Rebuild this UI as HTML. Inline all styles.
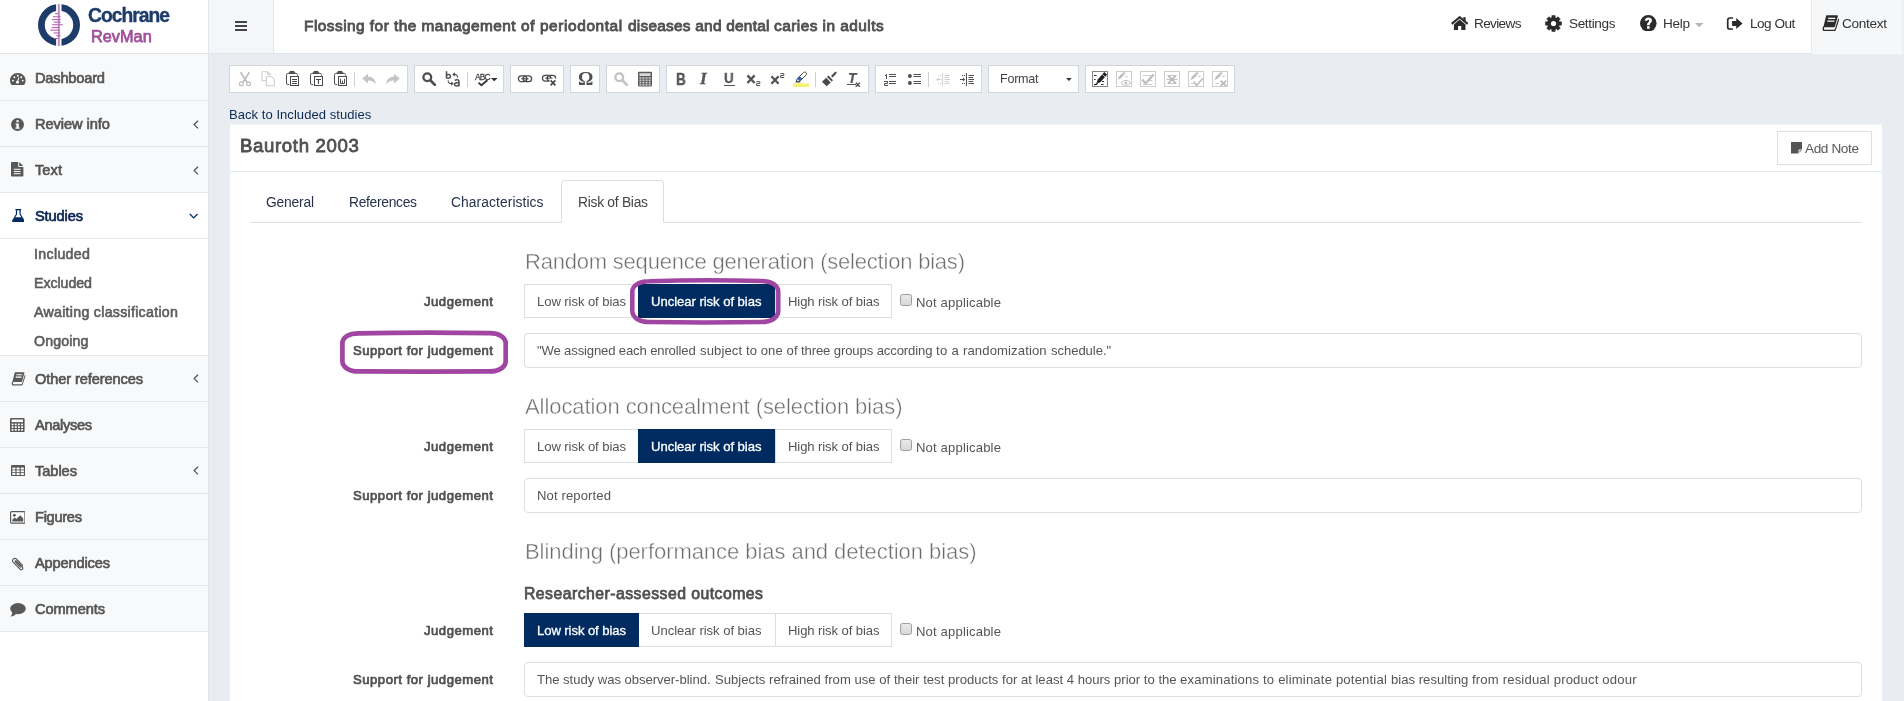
<!DOCTYPE html>
<html><head><meta charset="utf-8"><title>RevMan</title>
<style>
html,body{margin:0;padding:0;}
body{width:1904px;height:701px;overflow:hidden;background:#e9edf2;position:relative;
font-family:"Liberation Sans",sans-serif;}
.t{position:absolute;white-space:nowrap;display:block;will-change:transform;}
.r{position:absolute;box-sizing:border-box;display:block;}
</style></head><body>
<div class="r" style="left:0.00px;top:0.00px;width:1904.00px;height:54.00px;background:#fff;border-bottom:1px solid #e1e4e8;"></div>
<div class="r" style="left:209.00px;top:0.00px;width:65.00px;height:53.00px;background:#f5f6f9;border-right:1px solid #e4e6e9;"></div>
<div class="r" style="left:1811.00px;top:0.00px;width:91.50px;height:54.00px;background:#f6f7f9;border-left:1px solid #e6e8eb;border-right:1px solid #eceef1;border-bottom:1px solid #fafbfc;"></div>
<div class="r" style="left:1902.50px;top:0.00px;width:1.50px;height:54.00px;background:#eef0f3;"></div>
<div class="r" style="left:0.00px;top:54.00px;width:208.00px;height:647.00px;background:#fff;"></div>
<div class="r" style="left:208.00px;top:0.00px;width:1.00px;height:701.00px;background:#e1e4e8;"></div>
<div class="r" style="left:0.00px;top:54.00px;width:208.00px;height:47.00px;background:#f8f9fa;border-bottom:1px solid #e4e6e9;"></div>
<div class="r" style="left:0.00px;top:101.00px;width:208.00px;height:46.00px;background:#f8f9fa;border-bottom:1px solid #e4e6e9;"></div>
<div class="r" style="left:0.00px;top:147.00px;width:208.00px;height:46.00px;background:#f8f9fa;border-bottom:1px solid #e4e6e9;"></div>
<div class="r" style="left:0.00px;top:356.00px;width:208.00px;height:46.00px;background:#f8f9fa;border-bottom:1px solid #e4e6e9;"></div>
<div class="r" style="left:0.00px;top:402.00px;width:208.00px;height:46.00px;background:#f8f9fa;border-bottom:1px solid #e4e6e9;"></div>
<div class="r" style="left:0.00px;top:448.00px;width:208.00px;height:46.00px;background:#f8f9fa;border-bottom:1px solid #e4e6e9;"></div>
<div class="r" style="left:0.00px;top:494.00px;width:208.00px;height:46.00px;background:#f8f9fa;border-bottom:1px solid #e4e6e9;"></div>
<div class="r" style="left:0.00px;top:540.00px;width:208.00px;height:46.00px;background:#f8f9fa;border-bottom:1px solid #e4e6e9;"></div>
<div class="r" style="left:0.00px;top:586.00px;width:208.00px;height:46.00px;background:#f8f9fa;border-bottom:1px solid #e4e6e9;"></div>
<div class="r" style="left:0.00px;top:192.00px;width:208.00px;height:1.00px;background:#e4e6e9;"></div>
<div class="r" style="left:0.00px;top:238.00px;width:208.00px;height:1.00px;background:#e4e6e9;"></div>
<div class="r" style="left:0.00px;top:355.00px;width:208.00px;height:1.00px;background:#e4e6e9;"></div>
<span class="t" style="left:88.30px;top:6.16px;font-size:19.30px;line-height:19.30px;font-weight:700;color:#1d3c6a;letter-spacing:-1.003px;-webkit-text-stroke:0.35px #1d3c6a;">Cochrane</span>
<span class="t" style="left:90.50px;top:27.70px;font-size:16.30px;line-height:16.30px;font-weight:400;color:#a0509b;letter-spacing:0.021px;-webkit-text-stroke:0.75px #a0509b;">RevMan</span>
<span class="t" style="left:304.00px;top:17.96px;font-size:15.40px;line-height:15.40px;font-weight:400;color:#505050;letter-spacing:0.474px;white-space:pre;-webkit-text-stroke:0.85px #505050;">Flossing for the management </span>
<span class="t" style="left:521.00px;top:17.96px;font-size:15.40px;line-height:15.40px;font-weight:400;color:#505050;letter-spacing:0.610px;white-space:pre;-webkit-text-stroke:0.85px #505050;">of periodontal </span>
<span class="t" style="left:627.75px;top:17.96px;font-size:15.40px;line-height:15.40px;font-weight:400;color:#505050;letter-spacing:0.249px;white-space:pre;-webkit-text-stroke:0.85px #505050;">diseases and dental </span>
<span class="t" style="left:774.00px;top:17.96px;font-size:15.40px;line-height:15.40px;font-weight:400;color:#505050;letter-spacing:0.465px;white-space:pre;-webkit-text-stroke:0.85px #505050;">caries in adults</span>
<span class="t" style="left:1474.00px;top:16.99px;font-size:13.60px;line-height:13.60px;font-weight:400;color:#333;letter-spacing:-0.649px;">Reviews</span>
<span class="t" style="left:1569.00px;top:16.99px;font-size:13.60px;line-height:13.60px;font-weight:400;color:#333;letter-spacing:-0.377px;">Settings</span>
<span class="t" style="left:1663.00px;top:16.99px;font-size:13.60px;line-height:13.60px;font-weight:400;color:#333;letter-spacing:-0.324px;">Help</span>
<span class="t" style="left:1750.00px;top:16.99px;font-size:13.60px;line-height:13.60px;font-weight:400;color:#333;letter-spacing:-0.498px;">Log Out</span>
<span class="t" style="left:1842.00px;top:16.99px;font-size:13.60px;line-height:13.60px;font-weight:400;color:#333;letter-spacing:-0.312px;">Context</span>
<span class="t" style="left:35.30px;top:70.64px;font-size:14.60px;line-height:14.60px;font-weight:400;color:#555;letter-spacing:-0.178px;-webkit-text-stroke:0.68px #555;">Dashboard</span>
<span class="t" style="left:35.30px;top:116.64px;font-size:14.60px;line-height:14.60px;font-weight:400;color:#555;letter-spacing:-0.047px;-webkit-text-stroke:0.68px #555;">Review info</span>
<span class="t" style="left:35.30px;top:162.64px;font-size:14.60px;line-height:14.60px;font-weight:400;color:#555;letter-spacing:0.075px;-webkit-text-stroke:0.68px #555;">Text</span>
<span class="t" style="left:35.30px;top:371.64px;font-size:14.60px;line-height:14.60px;font-weight:400;color:#555;letter-spacing:-0.103px;-webkit-text-stroke:0.68px #555;">Other references</span>
<span class="t" style="left:35.30px;top:417.64px;font-size:14.60px;line-height:14.60px;font-weight:400;color:#555;letter-spacing:-0.320px;-webkit-text-stroke:0.68px #555;">Analyses</span>
<span class="t" style="left:35.30px;top:463.64px;font-size:14.60px;line-height:14.60px;font-weight:400;color:#555;letter-spacing:-0.041px;-webkit-text-stroke:0.68px #555;">Tables</span>
<span class="t" style="left:35.30px;top:509.64px;font-size:14.60px;line-height:14.60px;font-weight:400;color:#555;letter-spacing:-0.281px;-webkit-text-stroke:0.68px #555;">Figures</span>
<span class="t" style="left:35.30px;top:555.64px;font-size:14.60px;line-height:14.60px;font-weight:400;color:#555;letter-spacing:-0.145px;-webkit-text-stroke:0.68px #555;">Appendices</span>
<span class="t" style="left:35.30px;top:601.64px;font-size:14.60px;line-height:14.60px;font-weight:400;color:#555;letter-spacing:-0.084px;-webkit-text-stroke:0.68px #555;">Comments</span>
<span class="t" style="left:35.30px;top:208.64px;font-size:14.60px;line-height:14.60px;font-weight:400;color:#0a2450;letter-spacing:-0.116px;-webkit-text-stroke:0.68px #0a2450;">Studies</span>
<span class="t" style="left:34.00px;top:247.18px;font-size:14.20px;line-height:14.20px;font-weight:400;color:#5c5c5c;letter-spacing:0.330px;-webkit-text-stroke:0.60px #5c5c5c;">Included</span>
<span class="t" style="left:34.00px;top:276.18px;font-size:14.20px;line-height:14.20px;font-weight:400;color:#5c5c5c;letter-spacing:-0.060px;-webkit-text-stroke:0.60px #5c5c5c;">Excluded</span>
<span class="t" style="left:34.00px;top:305.18px;font-size:14.20px;line-height:14.20px;font-weight:400;color:#5c5c5c;letter-spacing:0.279px;-webkit-text-stroke:0.60px #5c5c5c;">Awaiting classification</span>
<span class="t" style="left:34.00px;top:334.18px;font-size:14.20px;line-height:14.20px;font-weight:400;color:#5c5c5c;letter-spacing:0.135px;-webkit-text-stroke:0.60px #5c5c5c;">Ongoing</span>
<div class="r" style="left:229.00px;top:65.00px;width:179.00px;height:27.50px;background:#fff;border:1px solid #d3d5d8;"></div>
<div class="r" style="left:414.00px;top:65.00px;width:90.00px;height:27.50px;background:#fff;border:1px solid #d3d5d8;"></div>
<div class="r" style="left:510.00px;top:65.00px;width:54.00px;height:27.50px;background:#fff;border:1px solid #d3d5d8;"></div>
<div class="r" style="left:570.00px;top:65.00px;width:30.00px;height:27.50px;background:#fff;border:1px solid #d3d5d8;"></div>
<div class="r" style="left:606.00px;top:65.00px;width:54.00px;height:27.50px;background:#fff;border:1px solid #d3d5d8;"></div>
<div class="r" style="left:666.00px;top:65.00px;width:203.00px;height:27.50px;background:#fff;border:1px solid #d3d5d8;"></div>
<div class="r" style="left:875.00px;top:65.00px;width:107.00px;height:27.50px;background:#fff;border:1px solid #d3d5d8;"></div>
<div class="r" style="left:988.00px;top:65.00px;width:91.00px;height:27.50px;background:#fff;border:1px solid #d3d5d8;"></div>
<div class="r" style="left:1085.00px;top:65.00px;width:150.00px;height:27.50px;background:#fff;border:1px solid #d3d5d8;"></div>
<div class="r" style="left:354.00px;top:72.00px;width:1.00px;height:15.00px;background:#cfd1d4;"></div>
<div class="r" style="left:467.00px;top:72.00px;width:1.00px;height:15.00px;background:#cfd1d4;"></div>
<div class="r" style="left:814.50px;top:72.00px;width:1.00px;height:15.00px;background:#cfd1d4;"></div>
<div class="r" style="left:928.00px;top:72.00px;width:1.00px;height:15.00px;background:#cfd1d4;"></div>
<span class="t" style="left:999.50px;top:72.83px;font-size:12.60px;line-height:12.60px;font-weight:400;color:#444;letter-spacing:-0.281px;">Format</span>
<svg class="r" style="left:1066.20px;top:78.10px;" width="5.80" height="2.90" viewBox="0 0 8 4"><path d="M0 0h8L4 4z" fill="#333"/></svg>
<span class="t" style="left:228.90px;top:107.90px;font-size:13.00px;line-height:13.00px;font-weight:400;color:#0a2a55;letter-spacing:0.056px;">Back to Included studies</span>
<div class="r" style="left:229.50px;top:124.00px;width:1652.50px;height:1.00px;background:#f3f5f8;"></div>
<div class="r" style="left:229.50px;top:125.00px;width:1652.50px;height:600.00px;background:#fff;"></div>
<div class="r" style="left:229.50px;top:171.00px;width:1652.50px;height:1.00px;background:#e6e8ea;"></div>
<span class="t" style="left:240.40px;top:136.86px;font-size:18.60px;line-height:18.60px;font-weight:400;color:#505050;letter-spacing:0.646px;-webkit-text-stroke:0.80px #505050;">Bauroth 2003</span>
<div class="r" style="left:1777.00px;top:131.00px;width:95.00px;height:34.00px;background:#fff;border:1px solid #dddfe2;"></div>
<svg class="r" style="left:1790.50px;top:142.00px;" width="11.50" height="11.50" viewBox="0 0 12 12"><path d="M0 0h12v7.5L8 12H0z" fill="#555"/><path d="M8.3 12V8.3H12z" fill="#555" stroke="#fff" stroke-width="1"/></svg>
<span class="t" style="left:1804.70px;top:141.59px;font-size:13.60px;line-height:13.60px;font-weight:400;color:#585858;letter-spacing:-0.387px;">Add Note</span>
<div class="r" style="left:250.00px;top:222.00px;width:1612.00px;height:1.00px;background:#dcdfe2;"></div>
<div class="r" style="left:561.00px;top:180.00px;width:103.00px;height:43.00px;background:#fff;border:1px solid #dcdfe2;border-bottom:1px solid #fff;border-radius:4px 4px 0 0;"></div>
<span class="t" style="left:266.00px;top:196.02px;font-size:13.80px;line-height:13.80px;font-weight:400;color:#25324a;letter-spacing:-0.183px;">General</span>
<span class="t" style="left:349.00px;top:196.02px;font-size:13.80px;line-height:13.80px;font-weight:400;color:#25324a;letter-spacing:-0.286px;">References</span>
<span class="t" style="left:451.00px;top:196.02px;font-size:13.80px;line-height:13.80px;font-weight:400;color:#25324a;letter-spacing:0.089px;">Characteristics</span>
<span class="t" style="left:578.00px;top:196.02px;font-size:13.80px;line-height:13.80px;font-weight:400;color:#444;letter-spacing:-0.260px;">Risk of Bias</span>
<span class="t" style="left:524.50px;top:250.58px;font-size:22.00px;line-height:22.00px;font-weight:400;color:#6c6c6c;letter-spacing:-0.211px;-webkit-text-stroke:0.45px #fff;">Random sequence generation (selection bias)</span>
<span class="t" style="left:524.50px;top:395.58px;font-size:22.00px;line-height:22.00px;font-weight:400;color:#6c6c6c;letter-spacing:-0.074px;-webkit-text-stroke:0.45px #fff;">Allocation concealment (selection bias)</span>
<span class="t" style="left:524.50px;top:540.58px;font-size:22.00px;line-height:22.00px;font-weight:400;color:#6c6c6c;letter-spacing:-0.049px;-webkit-text-stroke:0.45px #fff;">Blinding (performance bias and detection bias)</span>
<span class="t" style="left:524.30px;top:586.43px;font-size:15.80px;line-height:15.80px;font-weight:400;color:#505050;letter-spacing:0.460px;-webkit-text-stroke:0.75px #505050;">Researcher-assessed outcomes</span>
<div class="r" style="left:524.00px;top:284.00px;width:368.00px;height:34.00px;background:#fff;border:1px solid #dcdee0;"></div>
<div class="r" style="left:638.00px;top:284.00px;width:1.00px;height:34.00px;background:#dcdee0;"></div>
<div class="r" style="left:775.00px;top:284.00px;width:1.00px;height:34.00px;background:#dcdee0;"></div>
<div class="r" style="left:638.00px;top:284.00px;width:137.00px;height:34.00px;background:#002b60;"></div>
<span class="t" style="left:537.00px;top:295.11px;font-size:13.10px;line-height:13.10px;font-weight:400;color:#555;letter-spacing:-0.085px;">Low risk of bias</span>
<span class="t" style="left:651.20px;top:295.11px;font-size:13.10px;line-height:13.10px;font-weight:400;color:#fff;letter-spacing:-0.047px;-webkit-text-stroke:0.30px #fff;">Unclear risk of bias</span>
<span class="t" style="left:787.50px;top:295.11px;font-size:13.10px;line-height:13.10px;font-weight:400;color:#555;letter-spacing:-0.106px;">High risk of bias</span>
<div class="r" style="left:900.30px;top:294.40px;width:11.60px;height:11.60px;background:linear-gradient(#e9e9e9,#d8d8d8);border:1px solid #9c9c9c;border-radius:2.5px;"></div>
<span class="t" style="left:916.30px;top:295.71px;font-size:13.10px;line-height:13.10px;font-weight:400;color:#555;letter-spacing:0.152px;">Not applicable</span>
<span class="t" style="left:424.00px;top:294.91px;font-size:13.10px;line-height:13.10px;font-weight:400;color:#505050;letter-spacing:0.523px;-webkit-text-stroke:0.72px #505050;">Judgement</span>
<div class="r" style="left:524.00px;top:333.00px;width:1338.00px;height:34.50px;background:#fff;border:1px solid #dcdee0;border-radius:4px;"></div>
<span class="t" style="left:353.00px;top:344.11px;font-size:13.10px;line-height:13.10px;font-weight:400;color:#505050;letter-spacing:0.519px;-webkit-text-stroke:0.72px #505050;">Support for judgement</span>
<span class="t" style="left:537.40px;top:344.11px;font-size:13.10px;line-height:13.10px;font-weight:400;color:#555;letter-spacing:-0.147px;white-space:pre;">"We assigned each enrolled </span>
<span class="t" style="left:699.50px;top:344.11px;font-size:13.10px;line-height:13.10px;font-weight:400;color:#555;letter-spacing:0.096px;white-space:pre;">subject to one of </span>
<span class="t" style="left:801.00px;top:344.11px;font-size:13.10px;line-height:13.10px;font-weight:400;color:#555;letter-spacing:-0.115px;white-space:pre;">three groups according </span>
<span class="t" style="left:936.00px;top:344.11px;font-size:13.10px;line-height:13.10px;font-weight:400;color:#555;letter-spacing:0.352px;white-space:pre;">to a </span>
<span class="t" style="left:963.25px;top:344.11px;font-size:13.10px;line-height:13.10px;font-weight:400;color:#555;letter-spacing:0.112px;white-space:pre;">randomization </span>
<span class="t" style="left:1050.75px;top:344.11px;font-size:13.10px;line-height:13.10px;font-weight:400;color:#555;letter-spacing:-0.064px;white-space:pre;">schedule."</span>
<div class="r" style="left:524.00px;top:429.00px;width:368.00px;height:34.00px;background:#fff;border:1px solid #dcdee0;"></div>
<div class="r" style="left:638.00px;top:429.00px;width:1.00px;height:34.00px;background:#dcdee0;"></div>
<div class="r" style="left:775.00px;top:429.00px;width:1.00px;height:34.00px;background:#dcdee0;"></div>
<div class="r" style="left:638.00px;top:429.00px;width:137.00px;height:34.00px;background:#002b60;"></div>
<span class="t" style="left:537.00px;top:440.11px;font-size:13.10px;line-height:13.10px;font-weight:400;color:#555;letter-spacing:-0.085px;">Low risk of bias</span>
<span class="t" style="left:651.20px;top:440.11px;font-size:13.10px;line-height:13.10px;font-weight:400;color:#fff;letter-spacing:-0.047px;-webkit-text-stroke:0.30px #fff;">Unclear risk of bias</span>
<span class="t" style="left:787.50px;top:440.11px;font-size:13.10px;line-height:13.10px;font-weight:400;color:#555;letter-spacing:-0.106px;">High risk of bias</span>
<div class="r" style="left:900.30px;top:439.40px;width:11.60px;height:11.60px;background:linear-gradient(#e9e9e9,#d8d8d8);border:1px solid #9c9c9c;border-radius:2.5px;"></div>
<span class="t" style="left:916.30px;top:440.71px;font-size:13.10px;line-height:13.10px;font-weight:400;color:#555;letter-spacing:0.152px;">Not applicable</span>
<span class="t" style="left:424.00px;top:439.91px;font-size:13.10px;line-height:13.10px;font-weight:400;color:#505050;letter-spacing:0.523px;-webkit-text-stroke:0.72px #505050;">Judgement</span>
<div class="r" style="left:524.00px;top:478.00px;width:1338.00px;height:34.50px;background:#fff;border:1px solid #dcdee0;border-radius:4px;"></div>
<span class="t" style="left:353.00px;top:489.11px;font-size:13.10px;line-height:13.10px;font-weight:400;color:#505050;letter-spacing:0.519px;-webkit-text-stroke:0.72px #505050;">Support for judgement</span>
<span class="t" style="left:537.00px;top:489.11px;font-size:13.10px;line-height:13.10px;font-weight:400;color:#555;letter-spacing:0.107px;">Not reported</span>
<div class="r" style="left:524.00px;top:613.00px;width:368.00px;height:34.00px;background:#fff;border:1px solid #dcdee0;"></div>
<div class="r" style="left:638.00px;top:613.00px;width:1.00px;height:34.00px;background:#dcdee0;"></div>
<div class="r" style="left:775.00px;top:613.00px;width:1.00px;height:34.00px;background:#dcdee0;"></div>
<div class="r" style="left:524.00px;top:613.00px;width:115.00px;height:34.00px;background:#002b60;"></div>
<span class="t" style="left:537.00px;top:624.11px;font-size:13.10px;line-height:13.10px;font-weight:400;color:#fff;letter-spacing:-0.085px;-webkit-text-stroke:0.30px #fff;">Low risk of bias</span>
<span class="t" style="left:651.20px;top:624.11px;font-size:13.10px;line-height:13.10px;font-weight:400;color:#555;letter-spacing:-0.047px;">Unclear risk of bias</span>
<span class="t" style="left:787.50px;top:624.11px;font-size:13.10px;line-height:13.10px;font-weight:400;color:#555;letter-spacing:-0.106px;">High risk of bias</span>
<div class="r" style="left:900.30px;top:623.40px;width:11.60px;height:11.60px;background:linear-gradient(#e9e9e9,#d8d8d8);border:1px solid #9c9c9c;border-radius:2.5px;"></div>
<span class="t" style="left:916.30px;top:624.71px;font-size:13.10px;line-height:13.10px;font-weight:400;color:#555;letter-spacing:0.152px;">Not applicable</span>
<span class="t" style="left:424.00px;top:623.91px;font-size:13.10px;line-height:13.10px;font-weight:400;color:#505050;letter-spacing:0.523px;-webkit-text-stroke:0.72px #505050;">Judgement</span>
<div class="r" style="left:524.00px;top:662.00px;width:1338.00px;height:34.50px;background:#fff;border:1px solid #dcdee0;border-radius:4px;"></div>
<span class="t" style="left:353.00px;top:673.11px;font-size:13.10px;line-height:13.10px;font-weight:400;color:#505050;letter-spacing:0.519px;-webkit-text-stroke:0.72px #505050;">Support for judgement</span>
<span class="t" style="left:537.30px;top:673.11px;font-size:13.10px;line-height:13.10px;font-weight:400;color:#555;letter-spacing:-0.040px;white-space:pre;">The study was observer-blind. </span>
<span class="t" style="left:714.50px;top:673.11px;font-size:13.10px;line-height:13.10px;font-weight:400;color:#555;letter-spacing:0.020px;white-space:pre;">Subjects refrained from use of their test products </span>
<span class="t" style="left:1001.70px;top:673.11px;font-size:13.10px;line-height:13.10px;font-weight:400;color:#555;letter-spacing:-0.003px;white-space:pre;">for at least 4 hours prior to the </span>
<span class="t" style="left:1180.00px;top:673.11px;font-size:13.10px;line-height:13.10px;font-weight:400;color:#555;letter-spacing:0.174px;white-space:pre;">examinations to eliminate potential </span>
<span class="t" style="left:1390.90px;top:673.11px;font-size:13.10px;line-height:13.10px;font-weight:400;color:#555;letter-spacing:0.011px;white-space:pre;">bias resulting </span>
<span class="t" style="left:1471.90px;top:673.11px;font-size:13.10px;line-height:13.10px;font-weight:400;color:#555;letter-spacing:0.169px;white-space:pre;">from residual product odour</span>
<svg class="r" style="left:620.00px;top:270.00px;" width="170.00" height="64.00" viewBox="0 0 170 64"><path d="M29.30 11.20 C63.40 10.20 107.20 10.20 141.30 10.95 C151.16 10.95 158.30 15.32 158.30 21.70 L158.30 41.10 C158.30 47.48 151.16 52.10 141.30 52.10 C107.20 52.60 63.40 52.60 29.30 52.10 C19.44 52.10 12.30 47.48 12.30 41.10 L12.30 21.70 C12.30 15.32 19.44 11.20 29.30 11.20 Z" fill="none" stroke="#a145a3" stroke-width="4.5" stroke-linejoin="round"/></svg>
<svg class="r" style="left:330.00px;top:322.00px;" width="190.00" height="60.00" viewBox="0 0 190 60"><path d="M28.40 11.30 C69.55 10.50 118.55 10.50 159.70 11.10 C168.98 11.10 175.70 15.31 175.70 21.40 L175.70 38.90 C175.70 44.99 168.98 49.40 159.70 49.40 C118.55 49.80 69.55 49.80 28.40 49.40 C19.12 49.40 12.40 44.99 12.40 38.90 L12.40 21.40 C12.40 15.31 19.12 11.30 28.40 11.30 Z" fill="none" stroke="#a145a3" stroke-width="4.7" stroke-linejoin="round"/></svg>
<svg class="r" style="left:38.00px;top:4.00px;" width="42.00" height="42.00" viewBox="0 0 42 42"><circle cx="21" cy="21" r="17.6" fill="none" stroke="#1d3c6a" stroke-width="6.8"/><rect x="18.1" y="-1" width="5.4" height="44" fill="#fff"/><rect x="19.8" y="0" width="2" height="42" fill="#c58bc4"/><rect x="17.0" y="9.2" width="4.0" height="1.1" fill="#b566b2"/><rect x="15.0" y="12.2" width="7.6" height="1.1" fill="#b566b2"/><rect x="13.8" y="15.0" width="9.0" height="1.1" fill="#b566b2"/><rect x="15.6" y="17.6" width="7.0" height="1.1" fill="#b566b2"/><rect x="14.2" y="20.2" width="10.6" height="1.1" fill="#b566b2"/><rect x="13.6" y="23.0" width="8.0" height="1.1" fill="#b566b2"/><rect x="12.4" y="25.6" width="9.4" height="1.1" fill="#b566b2"/><rect x="15.6" y="28.4" width="6.6" height="1.1" fill="#b566b2"/><rect x="18.4" y="31.2" width="4.2" height="1.1" fill="#b566b2"/><rect x="16.8" y="34.0" width="3.0" height="1.1" fill="#b566b2"/></svg>
<div class="r" style="left:235.00px;top:21.20px;width:12.40px;height:1.90px;background:#444;"></div>
<div class="r" style="left:235.00px;top:25.20px;width:12.40px;height:1.90px;background:#444;"></div>
<div class="r" style="left:235.00px;top:29.20px;width:12.40px;height:1.90px;background:#444;"></div>
<svg class="r" style="left:1450.60px;top:15.60px;" width="17.40" height="14.60" viewBox="0 0 17.4 14.6"><path d="M8.7 3.6 L2.9 8.4 V13.6 a.6 .6 0 0 0 .6 .6 H7.1 V10 h3.2 v4.2 h3.6 a.6 .6 0 0 0 .6 -.6 V8.4 Z" fill="#2b2b2b"/><path d="M.7 7.9 L8.7 1.2 L16.7 7.9" fill="none" stroke="#2b2b2b" stroke-width="2.1" stroke-linejoin="miter"/><rect x="12.3" y="1.2" width="2.3" height="4.6" fill="#2b2b2b"/></svg>
<svg class="r" style="left:1544.90px;top:14.60px;" width="17.00" height="17.00" viewBox="0 0 17 17"><polygon points="6.70,2.67 6.87,0.46 10.13,0.46 10.30,2.67 11.35,3.10 13.03,1.67 15.33,3.97 13.90,5.65 14.33,6.70 16.54,6.87 16.54,10.13 14.33,10.30 13.90,11.35 15.33,13.03 13.03,15.33 11.35,13.90 10.30,14.33 10.13,16.54 6.87,16.54 6.70,14.33 5.65,13.90 3.97,15.33 1.67,13.03 3.10,11.35 2.67,10.30 0.46,10.13 0.46,6.87 2.67,6.70 3.10,5.65 1.67,3.97 3.97,1.67 5.65,3.10" fill="#2b2b2b" stroke="#2b2b2b" stroke-width=".5" stroke-linejoin="round"/><circle cx="8.5" cy="8.5" r="2.6" fill="#fff"/></svg>
<svg class="r" style="left:1640.00px;top:14.80px;" width="16.60" height="16.60" viewBox="0 0 16.6 16.6"><circle cx="8.3" cy="8.3" r="8.3" fill="#2b2b2b"/><g transform="translate(8.3 8.3) scale(1.22) translate(-8.3 -8.3)"><path d="M5.4 6.3 C5.5 4.4 6.8 3.5 8.4 3.5 C10.1 3.5 11.3 4.5 11.3 6 C11.3 7.9 9.4 8 9.4 9.8 H7.3 C7.3 7.5 9 7.4 9 6.2 C9 5.7 8.7 5.4 8.3 5.4 C7.8 5.4 7.5 5.7 7.5 6.3 Z" fill="#fff"/><rect x="7.3" y="10.7" width="2.1" height="2.1" fill="#fff"/></g></svg>
<svg class="r" style="left:1694.50px;top:23.00px;" width="8.60" height="4.30" viewBox="0 0 8.6 4.3"><path d="M0 0h8.6L4.3 4.3z" fill="#b5b5b5"/></svg>
<svg class="r" style="left:1725.80px;top:16.60px;" width="17.60" height="13.00" viewBox="0 0 18 14.5"><path d="M6.2 1.1 H3.4 A2.3 2.3 0 0 0 1.1 3.4 V11.1 A2.3 2.3 0 0 0 3.4 13.4 H6.2" fill="none" stroke="#2b2b2b" stroke-width="1.9" stroke-linecap="round"/><path d="M6 4.6 H10.6 V1.2 L17.6 7.25 L10.6 13.3 V9.9 H6 Z" fill="#2b2b2b"/></svg>
<svg class="r" style="left:1821.80px;top:14.80px;" width="17.40" height="16.40" viewBox="0 0 17.4 16.4"><path d="M5 .2 H14.9 C15.7 .2 16 .8 15.8 1.5 L13 11.2 C12.8 11.9 12.4 12.2 11.7 12.2 H1.3 L4 1.3 C4.2 .5 4.5 .2 5 .2 Z" fill="#2b2b2b"/><path d="M1.2 11.4 C.1 13.2 .2 16.3 2.5 16.3 H12.1 C13 16.3 13.5 15.9 13.8 15.1 L17.3 4.3 L16.3 3.5 L13 13.8 C12.8 14.4 12.5 14.7 12 14.7 H2.7 C1.8 14.7 1.7 13.4 2.4 12.1 Z" fill="#2b2b2b"/><path d="M6.1 3.4 H13.3 M5.3 6.2 H12.4" stroke="#fff" stroke-width="1.25"/></svg>
<svg class="r" style="left:10.20px;top:72.60px;" width="15.60" height="12.00" viewBox="0 0 15.6 12"><path d="M7.8 0 C12.3 0 15.6 3.4 15.6 7.4 C15.6 9 15.2 10.4 14.4 11.6 C14.2 11.9 14 12 13.7 12 H1.9 C1.6 12 1.4 11.9 1.2 11.6 C.4 10.4 0 9 0 7.4 C0 3.4 3.3 0 7.8 0 Z" fill="#585858"/><circle cx="2.9" cy="7.6" r=".95" fill="#fff"/><circle cx="4.4" cy="4.2" r=".95" fill="#fff"/><circle cx="7.8" cy="2.7" r=".95" fill="#fff"/><circle cx="11.2" cy="4.2" r=".95" fill="#fff"/><circle cx="12.7" cy="7.6" r=".95" fill="#fff"/><path d="M7.4 9.2 L8.8 4.6" stroke="#fff" stroke-width="1"/><circle cx="7.5" cy="9.3" r="1.45" fill="#fff"/></svg>
<svg class="r" style="left:11.20px;top:117.60px;" width="13.00" height="13.00" viewBox="0 0 13 13"><circle cx="6.5" cy="6.5" r="6.5" fill="#585858"/><rect x="5.4" y="2.2" width="2.3" height="2" fill="#fff"/><path d="M4.6 5.4 H7.8 V9.4 H8.7 V10.8 H4.4 V9.4 H5.4 V6.8 H4.6 Z" fill="#fff"/></svg>
<svg class="r" style="left:11.20px;top:162.20px;" width="12.40" height="14.60" viewBox="0 0 12.4 14.6"><path d="M.8 0 H7.2 V4.2 A.8 .8 0 0 0 8 5 H12.4 V13.8 A.8 .8 0 0 1 11.6 14.6 H.8 A.8 .8 0 0 1 0 13.8 V.8 A.8 .8 0 0 1 .8 0 Z" fill="#585858"/><path d="M8.2 0 L12.3 4 H8.2 Z" fill="#585858"/><path d="M2.8 7.3 H9.6 M2.8 9.5 H9.6 M2.8 11.7 H9.6" stroke="#fff" stroke-width="1"/></svg>
<svg class="r" style="left:11.60px;top:208.80px;" width="12.60" height="13.40" viewBox="0 0 12.6 13.4"><path d="M3.4 .6 H9.2 M4.5 .6 V5.2 L.9 11.2 C.4 12.2 .9 12.9 1.9 12.9 H10.7 C11.7 12.9 12.2 12.2 11.7 11.2 L8.1 5.2 V.6" fill="none" stroke="#002b60" stroke-width="1.2"/><path d="M3 8.2 H9.6 L11.6 11.6 C11.9 12.3 11.5 12.9 10.7 12.9 H1.9 C1.1 12.9 .7 12.3 1 11.6 Z" fill="#002b60"/></svg>
<svg class="r" style="left:10.60px;top:372.30px;" width="15.00" height="13.60" viewBox="0 0 17.4 16.4"><path d="M5 .2 H14.9 C15.7 .2 16 .8 15.8 1.5 L13 11.2 C12.8 11.9 12.4 12.2 11.7 12.2 H1.3 L4 1.3 C4.2 .5 4.5 .2 5 .2 Z" fill="#585858"/><path d="M1.2 11.4 C.1 13.2 .2 16.3 2.5 16.3 H12.1 C13 16.3 13.5 15.9 13.8 15.1 L17.3 4.3 L16.3 3.5 L13 13.8 C12.8 14.4 12.5 14.7 12 14.7 H2.7 C1.8 14.7 1.7 13.4 2.4 12.1 Z" fill="#585858"/><path d="M6.1 3.4 H13.3 M5.3 6.2 H12.4" stroke="#fff" stroke-width="1.25"/></svg>
<svg class="r" style="left:10.00px;top:417.80px;" width="14.60" height="14.20" viewBox="0 0 14.6 14.2"><rect x="0" y="0" width="14.6" height="14.2" rx="1.2" fill="#585858"/><rect x="1.6" y="1.5" width="11.4" height="2.6" fill="#fff"/><rect x="1.6" y="5.6" width="1.9" height="1.7" fill="#fff"/><rect x="4.8" y="5.6" width="1.9" height="1.7" fill="#fff"/><rect x="7.9" y="5.6" width="1.9" height="1.7" fill="#fff"/><rect x="11.1" y="5.6" width="1.9" height="1.7" fill="#fff"/><rect x="1.6" y="8.3" width="1.9" height="1.7" fill="#fff"/><rect x="4.8" y="8.3" width="1.9" height="1.7" fill="#fff"/><rect x="7.9" y="8.3" width="1.9" height="1.7" fill="#fff"/><rect x="11.1" y="8.3" width="1.9" height="1.7" fill="#fff"/><rect x="1.6" y="11.0" width="1.9" height="1.7" fill="#fff"/><rect x="4.8" y="11.0" width="1.9" height="1.7" fill="#fff"/><rect x="7.9" y="11.0" width="1.9" height="1.7" fill="#fff"/><rect x="11.1" y="11.0" width="1.9" height="1.7" fill="#fff"/></svg>
<svg class="r" style="left:10.60px;top:464.80px;" width="14.20" height="11.40" viewBox="0 0 14.2 11.4"><rect x="0" y="0" width="14.2" height="11.4" rx="1.2" fill="#585858"/><rect x="1.30" y="2.60" width="3.1" height="1.9" fill="#fff"/><rect x="5.55" y="2.60" width="3.1" height="1.9" fill="#fff"/><rect x="9.80" y="2.60" width="3.1" height="1.9" fill="#fff"/><rect x="1.30" y="5.35" width="3.1" height="1.9" fill="#fff"/><rect x="5.55" y="5.35" width="3.1" height="1.9" fill="#fff"/><rect x="9.80" y="5.35" width="3.1" height="1.9" fill="#fff"/><rect x="1.30" y="8.10" width="3.1" height="1.9" fill="#fff"/><rect x="5.55" y="8.10" width="3.1" height="1.9" fill="#fff"/><rect x="9.80" y="8.10" width="3.1" height="1.9" fill="#fff"/></svg>
<svg class="r" style="left:9.90px;top:510.80px;" width="15.60" height="12.80" viewBox="0 0 15.6 12.8"><rect x=".6" y=".6" width="14.4" height="11.6" rx="1" fill="#fff" stroke="#585858" stroke-width="1.2"/><circle cx="4.4" cy="4.2" r="1.5" fill="#585858"/><path d="M2.4 10.6 V8.6 L4.8 6.4 L6.4 8 L10.2 4.2 L13.2 7.2 V10.6 Z" fill="#585858"/></svg>
<svg class="r" style="left:11.40px;top:556.60px;" width="13.40" height="14.00" viewBox="0 0 13.4 14"><path d="M11.6 8.4 L5.6 2.2 C4.6 1.2 3.2 1.2 2.3 2.1 C1.4 3 1.4 4.4 2.4 5.4 L9 12.2 C9.7 12.9 10.7 12.9 11.3 12.3 C11.9 11.7 11.9 10.7 11.2 10 L5.4 4 C5.1 3.7 4.7 3.7 4.4 4 C4.1 4.3 4.1 4.7 4.4 5 L9.4 10.2" fill="none" stroke="#585858" stroke-width="1.15" stroke-linecap="round"/></svg>
<svg class="r" style="left:9.90px;top:603.00px;" width="15.80" height="13.80" viewBox="0 0 15.8 13.8"><ellipse cx="8" cy="5.6" rx="7.8" ry="5.6" fill="#585858"/><path d="M2.2 8.4 C2.4 10.8 1.6 12.4 .4 13.6 C3 13.4 5 12.2 6.2 10.4 Z" fill="#585858"/></svg>
<svg class="r" style="left:192.60px;top:119.60px;" width="6.00" height="9.20" viewBox="0 0 6 9.2"><path d="M5 .8 L1.2 4.6 L5 8.4" fill="none" stroke="#555" stroke-width="1.3"/></svg>
<svg class="r" style="left:192.60px;top:165.60px;" width="6.00" height="9.20" viewBox="0 0 6 9.2"><path d="M5 .8 L1.2 4.6 L5 8.4" fill="none" stroke="#555" stroke-width="1.3"/></svg>
<svg class="r" style="left:192.60px;top:374.30px;" width="6.00" height="9.20" viewBox="0 0 6 9.2"><path d="M5 .8 L1.2 4.6 L5 8.4" fill="none" stroke="#555" stroke-width="1.3"/></svg>
<svg class="r" style="left:192.60px;top:466.30px;" width="6.00" height="9.20" viewBox="0 0 6 9.2"><path d="M5 .8 L1.2 4.6 L5 8.4" fill="none" stroke="#555" stroke-width="1.3"/></svg>
<svg class="r" style="left:188.80px;top:212.60px;" width="9.40" height="6.20" viewBox="0 0 9.4 6.2"><path d="M.8 1 L4.7 4.9 L8.6 1" fill="none" stroke="#002b60" stroke-width="1.3"/></svg>
<svg class="r" style="left:237.00px;top:71.00px;" width="16.00" height="16.00" viewBox="0 0 16 16"><path d="M3.6 1.2 L10 11.2 M12.4 1.2 L6 11.2" stroke="#bdbdbd" stroke-width="1.7" fill="none"/><circle cx="4.4" cy="12.8" r="1.9" fill="none" stroke="#bdbdbd" stroke-width="1.2"/><circle cx="11.6" cy="12.8" r="1.9" fill="none" stroke="#bdbdbd" stroke-width="1.2"/></svg>
<svg class="r" style="left:260.50px;top:71.00px;" width="16.00" height="16.00" viewBox="0 0 16 16"><path d="M5 9.7 H1 V.7 H6.6 L9.2 3.3 V5.2" fill="none" stroke="#cdcdcd" stroke-width="1.1"/><path d="M6.4 .8 V3.5 H9" fill="none" stroke="#cdcdcd" stroke-width=".9"/><path d="M5.3 5.7 H10.6 L13.3 8.4 V14.7 H5.3 Z" fill="#fff" stroke="#cdcdcd" stroke-width="1.1"/></svg>
<svg class="r" style="left:284.00px;top:71.00px;" width="16.00" height="16.00" viewBox="0 0 16 16"><rect x="5.6" y=".1" width="4.8" height="1.6" rx=".6" fill="#4a4a4a"/><rect x="4.5" y="1.3" width="7" height="1.7" fill="#4a4a4a"/><path d="M4.4 2.5 H3.7 C2.9 2.5 2.5 2.9 2.5 3.7 V12.3 C2.5 13.1 2.9 13.5 3.7 13.5 H5.2 M11.6 2.5 H12.4 C13.1 2.5 13.5 2.9 13.5 3.7 V4.6" fill="none" stroke="#4a4a4a" stroke-width="1"/><rect x="6.5" y="5.5" width="8" height="9" fill="#fff" stroke="#4a4a4a" stroke-width="1"/><path d="M8 8.5 H13 M8 10.5 H13 M8 12.5 H13" stroke="#4a4a4a" stroke-width="1"/></svg>
<svg class="r" style="left:308.00px;top:71.00px;" width="16.00" height="16.00" viewBox="0 0 16 16"><rect x="5.6" y=".1" width="4.8" height="1.6" rx=".6" fill="#4a4a4a"/><rect x="4.5" y="1.3" width="7" height="1.7" fill="#4a4a4a"/><path d="M4.4 2.5 H3.7 C2.9 2.5 2.5 2.9 2.5 3.7 V12.3 C2.5 13.1 2.9 13.5 3.7 13.5 H5.2 M11.6 2.5 H12.4 C13.1 2.5 13.5 2.9 13.5 3.7 V4.6" fill="none" stroke="#4a4a4a" stroke-width="1"/><rect x="6.5" y="5.5" width="8" height="9" fill="#fff" stroke="#4a4a4a" stroke-width="1"/><path d="M8 8.5 H13 M10.5 8.5 V13" stroke="#4a4a4a" stroke-width="1.1" fill="none"/></svg>
<svg class="r" style="left:332.00px;top:71.00px;" width="16.00" height="16.00" viewBox="0 0 16 16"><rect x="5.6" y=".1" width="4.8" height="1.6" rx=".6" fill="#4a4a4a"/><rect x="4.5" y="1.3" width="7" height="1.7" fill="#4a4a4a"/><path d="M4.4 2.5 H3.7 C2.9 2.5 2.5 2.9 2.5 3.7 V12.3 C2.5 13.1 2.9 13.5 3.7 13.5 H5.2 M11.6 2.5 H12.4 C13.1 2.5 13.5 2.9 13.5 3.7 V4.6" fill="none" stroke="#4a4a4a" stroke-width="1"/><rect x="6.5" y="5.5" width="8" height="9" fill="#fff" stroke="#4a4a4a" stroke-width="1"/><path d="M8.5 7.8 V12.5 H12.5 V7.8 M10.5 9.8 V12.5" stroke="#4a4a4a" stroke-width="1" fill="none"/></svg>
<svg class="r" style="left:361.20px;top:72.00px;" width="16.00" height="16.00" viewBox="0 0 16 16"><path d="M1.2 6.6 L7 1.8 V4.8 C11.6 4.8 14.6 7.2 14.8 12.6 C13.2 9.8 11 8.6 7 8.6 V11.4 Z" fill="#c4c4c4"/></svg>
<svg class="r" style="left:384.60px;top:72.00px;" width="16.00" height="16.00" viewBox="0 0 16 16"><g transform="translate(16,0) scale(-1,1)"><path d="M1.2 6.6 L7 1.8 V4.8 C11.6 4.8 14.6 7.2 14.8 12.6 C13.2 9.8 11 8.6 7 8.6 V11.4 Z" fill="#c4c4c4"/></g></svg>
<svg class="r" style="left:420.60px;top:71.00px;" width="16.00" height="16.00" viewBox="0 0 16 16"><circle cx="6.3" cy="6.3" r="3.9" fill="none" stroke="#4d4d4d" stroke-width="2.3"/><path d="M9.8 9.8 L13.9 13.9" stroke="#4d4d4d" stroke-width="2.7" stroke-linecap="round"/></svg>
<svg class="r" style="left:444.60px;top:71.00px;" width="16.00" height="16.00" viewBox="0 0 16 16"><path d="M1.5 .2 V7.4 M1.5 4.4 C2.4 3 5.4 2.9 5.4 5.2 C5.4 7.7 2.4 7.7 1.5 6.4" fill="none" stroke="#4d4d4d" stroke-width="1.5"/><path d="M9.8 9.6 C10.8 8.4 14 8.2 14 10.4 V15.4 M14 12 C11.6 11.6 9.5 12 9.5 13.6 C9.5 15.4 12.6 15.4 14 13.8" fill="none" stroke="#4d4d4d" stroke-width="1.5"/><path d="M9 3.4 C11.6 3.2 12.6 4.4 12.6 6.6" fill="none" stroke="#4d4d4d" stroke-width="1.1"/><path d="M9.8 1.2 L7.2 3.4 L9.8 5.6 Z" fill="#4d4d4d"/><path d="M3.2 9.4 C3 11.6 4.2 12.6 6.8 12.6" fill="none" stroke="#4d4d4d" stroke-width="1.1"/><path d="M6.2 10.4 L8.8 12.6 L6.2 14.8 Z" fill="#4d4d4d"/></svg>
<span class="t" style="left:474.8px;top:72.4px;font-size:8.4px;line-height:9px;font-weight:400;color:#444;letter-spacing:-0.85px;transform:scaleY(1.12);transform-origin:0 0;-webkit-text-stroke:.25px #444;">ABC</span>
<svg class="r" style="left:477.00px;top:79.00px;" width="12.00" height="8.00" viewBox="0 0 12 8"><path d="M1.4 3.6 L4.4 6.2 L10.4 1.2" fill="none" stroke="#3a3a3a" stroke-width="1.9"/></svg>
<svg class="r" style="left:490.60px;top:77.60px;" width="6.40" height="3.40" viewBox="0 0 6.4 3.4"><path d="M0 0h6.4L3.2 3.4z" fill="#333"/></svg>
<svg class="r" style="left:517.00px;top:71.00px;" width="16.00" height="16.00" viewBox="0 0 16 16"><rect x="1.4" y="4.9" width="8.4" height="5.8" rx="2.9" fill="none" stroke="#484848" stroke-width="1.3"/><rect x="6.2" y="4.9" width="8.4" height="5.8" rx="2.9" fill="none" stroke="#484848" stroke-width="1.3"/><path d="M4.4 7.8 H11.6" stroke="#484848" stroke-width="1.2"/></svg>
<svg class="r" style="left:541.00px;top:71.00px;" width="16.00" height="16.00" viewBox="0 0 16 16"><g transform="translate(0,-.6)"><rect x="1.4" y="4.9" width="8.4" height="5.8" rx="2.9" fill="none" stroke="#484848" stroke-width="1.3"/><rect x="6.2" y="4.9" width="8.4" height="5.8" rx="2.9" fill="none" stroke="#484848" stroke-width="1.3"/><path d="M4.4 7.8 H11.6" stroke="#484848" stroke-width="1.2"/></g><rect x="8.4" y="7.6" width="7.6" height="8" fill="#fff"/><path d="M9.6 9.4 L14.4 14.4 M14.4 9.4 L9.6 14.4" stroke="#484848" stroke-width="1.6"/></svg>
<span class="t" style="left:577.6px;top:69.2px;font-family:'Liberation Serif',serif;font-size:19.2px;line-height:20px;font-weight:700;color:#505050;">&#937;</span>
<svg class="r" style="left:613.00px;top:71.00px;" width="16.00" height="16.00" viewBox="0 0 16 16"><circle cx="6.3" cy="6.3" r="3.9" fill="none" stroke="#c2c2c2" stroke-width="2.3"/><path d="M9.8 9.8 L13.9 13.9" stroke="#c2c2c2" stroke-width="2.7" stroke-linecap="round"/></svg>
<svg class="r" style="left:637.00px;top:71.00px;" width="16.00" height="16.00" viewBox="0 0 16 16"><rect x="1" y=".8" width="14" height="14.6" rx="1" fill="#5a5a5a"/><rect x="2.4" y="2.2" width="11.2" height="2.8" fill="#d8d8d8"/><rect x="2.40" y="6.20" width="2" height="1.6" fill="#cfcfcf"/><rect x="5.47" y="6.20" width="2" height="1.6" fill="#cfcfcf"/><rect x="8.54" y="6.20" width="2" height="1.6" fill="#cfcfcf"/><rect x="11.61" y="6.20" width="2" height="1.6" fill="#cfcfcf"/><rect x="2.40" y="8.50" width="2" height="1.6" fill="#cfcfcf"/><rect x="5.47" y="8.50" width="2" height="1.6" fill="#cfcfcf"/><rect x="8.54" y="8.50" width="2" height="1.6" fill="#cfcfcf"/><rect x="11.61" y="8.50" width="2" height="1.6" fill="#cfcfcf"/><rect x="2.40" y="10.80" width="2" height="1.6" fill="#cfcfcf"/><rect x="5.47" y="10.80" width="2" height="1.6" fill="#cfcfcf"/><rect x="8.54" y="10.80" width="2" height="1.6" fill="#cfcfcf"/><rect x="11.61" y="10.80" width="2" height="1.6" fill="#cfcfcf"/><rect x="2.40" y="13.10" width="2" height="1.6" fill="#cfcfcf"/><rect x="5.47" y="13.10" width="2" height="1.6" fill="#cfcfcf"/><rect x="8.54" y="13.10" width="2" height="1.6" fill="#cfcfcf"/><rect x="11.61" y="13.10" width="2" height="1.6" fill="#cfcfcf"/></svg>
<span class="t" style="left:675.90px;top:72.09px;font-family:'Liberation Sans';font-size:15.60px;line-height:15.60px;font-weight:700;color:#555;transform:scaleX(0.860);transform-origin:0 0;-webkit-text-stroke:0.45px #555;">B</span>
<span class="t" style="left:700.00px;top:70.34px;font-family:'Liberation Serif';font-size:17.20px;line-height:17.20px;font-weight:700;font-style:italic;color:#555;transform:scaleX(1.000);transform-origin:0 0;-webkit-text-stroke:0.30px #555;">I</span>
<span class="t" style="left:723.90px;top:70.84px;font-family:'Liberation Sans';font-size:14.60px;line-height:14.60px;font-weight:700;color:#555;transform:scaleX(0.920);transform-origin:0 0;-webkit-text-stroke:0.30px #555;">U</span>
<div class="r" style="left:723.60px;top:85.00px;width:11.20px;height:1.10px;background:#555;"></div>
<svg class="r" style="left:746.00px;top:71.00px;" width="16.00" height="16.00" viewBox="0 0 16 16"><path d="M1.4 4.4 L8.6 12 M8.6 4.4 L1.4 12" stroke="#555" stroke-width="2.3"/><path d="M10.4 10.6 h3.4 v1.9 h-3.2 v2 h3.6" fill="none" stroke="#555" stroke-width="1"/></svg>
<svg class="r" style="left:770.00px;top:71.00px;" width="16.00" height="16.00" viewBox="0 0 16 16"><path d="M1.4 5.2 L8.6 12.8 M8.6 5.2 L1.4 12.8" stroke="#555" stroke-width="2.3"/><path d="M10.4 2.6 h3.4 v1.9 h-3.2 v2 h3.6" fill="none" stroke="#555" stroke-width="1"/></svg>
<svg class="r" style="left:793.00px;top:71.00px;" width="16.00" height="16.00" viewBox="0 0 16 16"><rect x="0" y="12.4" width="16" height="3.6" fill="#f4f170"/><path d="M3.2 10.6 L4.2 7.6 L10.6 1.6 C11.4 .9 12.4 .9 13.1 1.6 C13.8 2.3 13.8 3.2 13.1 4 L6.8 10.2 Z" fill="#fff" stroke="#444" stroke-width="1"/><path d="M4.2 7.8 L6.6 10.2 L9.2 7.6 L6.8 5.2 Z" fill="#3d59b5"/><path d="M2.6 11 H7.4" stroke="#444" stroke-width="1"/></svg>
<svg class="r" style="left:821.40px;top:71.00px;" width="16.00" height="16.00" viewBox="0 0 16 16"><path d="M10 5 L13.6 1.2 C14.2 .6 15 .6 15.4 1.1 C15.8 1.6 15.7 2.3 15.2 2.8 L11.6 6.4 Z" fill="#4a4a4a"/><path d="M7.4 4.6 L12 9.2 L10.6 10.6 L6 6 Z" fill="#4a4a4a"/><path d="M5.2 6.8 L9.8 11.4 L5.6 15.2 L1 10.8 Z" fill="#4a4a4a"/></svg>
<span class="t" style="left:847.60px;top:71.72px;font-family:'Liberation Sans';font-size:13.80px;line-height:13.80px;font-weight:700;font-style:italic;color:#555;transform:scaleX(1.000);transform-origin:0 0;-webkit-text-stroke:0.20px #555;">T</span>
<div class="r" style="left:846.80px;top:84.20px;width:9.20px;height:1.10px;background:#555;"></div>
<svg class="r" style="left:855.00px;top:81.60px;" width="5.60" height="5.60" viewBox="0 0 6 6"><path d="M.8 .8 L5.2 5.2 M5.2 .8 L.8 5.2" stroke="#555" stroke-width="1.5"/></svg>
<svg class="r" style="left:882.00px;top:71.00px;" width="16.00" height="16.00" viewBox="0 0 16 16"><path d="M7 3.5 H14 M7 5.5 H14 M7 10.5 H14 M7 12.5 H14" stroke="#505050" stroke-width="1"/><path d="M3 4.5 H4 M4.5 3 V8" fill="none" stroke="#505050" stroke-width="1"/><path d="M2 10.5 H5.5 M5.5 10 V12.5 H2.5 V14.5 H6" fill="none" stroke="#505050" stroke-width="1"/></svg>
<svg class="r" style="left:906.00px;top:71.00px;" width="16.00" height="16.00" viewBox="0 0 16 16"><path d="M7.4 3.5 H15 M7.4 5.5 H15 M7.4 10.5 H15 M7.4 12.5 H15" stroke="#505050" stroke-width="1"/><circle cx="3.9" cy="5" r="1.95" fill="#505050"/><circle cx="3.9" cy="12" r="1.95" fill="#505050"/></svg>
<svg class="r" style="left:935.00px;top:71.00px;" width="16.00" height="16.00" viewBox="0 0 16 16"><path d="M7.5 2 V15" stroke="#d0d0d0" stroke-width="1"/><path d="M9.5 4.5 H15 M9.5 6.5 H14 M9.5 8.5 H15 M9.5 10.5 H14 M9.5 12.5 H15" stroke="#d0d0d0" stroke-width="1"/><path d="M3 4.5 H4 M5 4.5 H6 M3 12.5 H4 M5 12.5 H6" stroke="#d0d0d0" stroke-width="1"/><path d="M1.6 8.5 H6" stroke="#d0d0d0" stroke-width="1"/><path d="M3.4 6.6 L1.2 8.5 L3.4 10.4 Z" fill="#d0d0d0"/></svg>
<svg class="r" style="left:959.00px;top:71.00px;" width="16.00" height="16.00" viewBox="0 0 16 16"><path d="M7.5 2 V15" stroke="#505050" stroke-width="1"/><path d="M9.5 4.5 H15 M9.5 6.5 H14 M9.5 8.5 H15 M9.5 10.5 H14 M9.5 12.5 H15" stroke="#505050" stroke-width="1"/><path d="M3 4.5 H4 M5 4.5 H6 M3 12.5 H4 M5 12.5 H6" stroke="#505050" stroke-width="1"/><path d="M1 8.5 H5" stroke="#505050" stroke-width="1"/><path d="M4 6.6 L6.2 8.5 L4 10.4 Z" fill="#505050"/></svg>
<svg class="r" style="left:1092.00px;top:71.00px;" width="16.00" height="16.00" viewBox="0 0 16 16"><rect x=".5" y=".5" width="15" height="15" fill="#fff" stroke="#858585" stroke-width="1"/><path d="M2 4.5 H4.6 M2 8.5 H3.6 M2 13.5 H4 M9 13.5 H11.6 M10 10.5 H12" stroke="#333" stroke-width="1"/><path d="M15.16 3.59 L12.24 1.01 L5.69 8.40 L4.30 12.90 L8.61 10.98 Z" fill="#222"/><path d="M13.09 5.93 L10.17 3.34" stroke="#fff" stroke-width=".7"/><path d="M5.2 12.4 C4.4 13.6 3.4 13.8 2.4 13.6" fill="none" stroke="#222" stroke-width="1.4"/></svg>
<svg class="r" style="left:1116.00px;top:71.00px;" width="16.00" height="16.00" viewBox="0 0 16 16"><rect x=".5" y=".5" width="15" height="15" fill="#fff" stroke="#cdcdcd" stroke-width="1"/><path d="M9.53 2.51 L7.67 0.69 L2.86 5.64 L1.80 8.60 L4.73 7.45 Z" fill="#bcbcbc"/><path d="M8.08 4.00 L6.22 2.19" stroke="#fff" stroke-width=".7"/><path d="M9 5.5 H12" stroke="#bcbcbc" stroke-width=".7"/><path d="M5.2 11.8 C7.2 8.6 12.6 8.6 14.6 11.8 C12.6 15 7.2 15 5.2 11.8 Z" fill="#fff" stroke="#bcbcbc" stroke-width="1"/><circle cx="9.9" cy="11.8" r="1.4" fill="#bcbcbc"/></svg>
<svg class="r" style="left:1140.00px;top:71.00px;" width="16.00" height="16.00" viewBox="0 0 16 16"><rect x=".5" y=".5" width="15" height="15" fill="#fff" stroke="#cdcdcd" stroke-width="1"/><path d="M3 4.5 H11 M8 9.5 H12.5 M3 13.5 H12.5" stroke="#bcbcbc" stroke-width=".8"/><path d="M2.2 8.6 L5.6 12.4 L13.6 3.6" fill="none" stroke="#bcbcbc" stroke-width="2.3"/></svg>
<svg class="r" style="left:1164.00px;top:71.00px;" width="16.00" height="16.00" viewBox="0 0 16 16"><rect x=".5" y=".5" width="15" height="15" fill="#fff" stroke="#cdcdcd" stroke-width="1"/><path d="M3.5 4.5 H12.5 M2.5 8.5 H13.5 M3.5 12.5 H12.5" stroke="#bcbcbc" stroke-width=".9"/><path d="M4.2 4.6 L11.8 12.4 M11.8 4.6 L4.2 12.4" stroke="#bcbcbc" stroke-width="1.9"/></svg>
<svg class="r" style="left:1188.00px;top:71.00px;" width="16.00" height="16.00" viewBox="0 0 16 16"><rect x=".5" y=".5" width="15" height="15" fill="#fff" stroke="#cdcdcd" stroke-width="1"/><path d="M10.73 2.51 L8.87 0.69 L3.66 6.04 L2.60 9.00 L5.53 7.86 Z" fill="#bcbcbc"/><path d="M9.28 4.00 L7.42 2.18" stroke="#fff" stroke-width=".7"/><path d="M3 12.5 H6 M10 5.5 H13" stroke="#bcbcbc" stroke-width=".7"/><path d="M6 10.8 L8.6 14.4 L14.8 7.2" fill="none" stroke="#bcbcbc" stroke-width="1.6"/></svg>
<svg class="r" style="left:1212.00px;top:71.00px;" width="16.00" height="16.00" viewBox="0 0 16 16"><rect x=".5" y=".5" width="15" height="15" fill="#fff" stroke="#cdcdcd" stroke-width="1"/><path d="M10.73 2.51 L8.87 0.69 L3.66 6.04 L2.60 9.00 L5.53 7.86 Z" fill="#bcbcbc"/><path d="M9.28 4.00 L7.42 2.18" stroke="#fff" stroke-width=".7"/><path d="M3.5 12.5 H7 M10 5.5 H13" stroke="#bcbcbc" stroke-width=".7"/><path d="M8.6 9.6 L14.2 15 M14.2 9.6 L8.6 15" stroke="#bcbcbc" stroke-width="1.8"/></svg>
</body></html>
